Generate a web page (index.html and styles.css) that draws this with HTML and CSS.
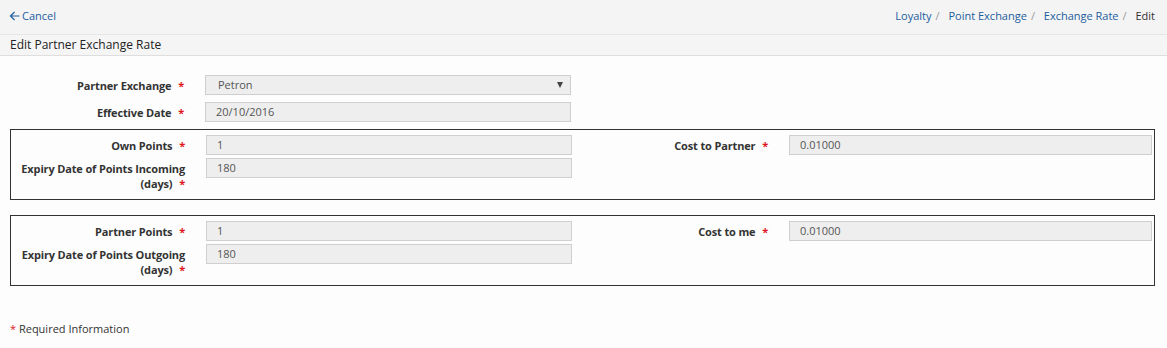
FILE: index.html
```html
<!DOCTYPE html>
<html lang="en">
<head>
    <meta charset="UTF-8">
    <meta name="viewport" content="width=device-width, initial-scale=1.0">
    <title>Edit Partner Exchange Rate</title>
    <link rel="stylesheet" href="styles.css">
</head>
<body>
    <div class="topbar">
        <a class="cancel" href="#">
            <svg width="11" height="10" viewBox="0 0 11 10"><path d="M10.5 5H1.5M5.5 1L1.5 5L5.5 9" fill="none" stroke="#1b5d9e" stroke-width="1.2"/></svg>
            Cancel
        </a>
        <div class="breadcrumb">
            <a href="#">Loyalty</a><span class="sep">/</span>
            <a href="#">Point Exchange</a><span class="sep">/</span>
            <a href="#">Exchange Rate</a><span class="sep">/</span>
            <span class="current">Edit</span>
        </div>
    </div>

    <div class="title-bar">Edit Partner Exchange Rate</div>

    <div class="content">
        <div class="row">
            <label>Partner Exchange <span class="req">*</span></label>
            <div class="field select">Petron <span class="caret"></span></div>
        </div>
        <div class="row">
            <label>Effective Date <span class="req">*</span></label>
            <div class="field">20/10/2016</div>
        </div>

        <!-- Incoming -->
        <div class="box">
            <div class="col">
                <div class="row">
                    <label>Own Points <span class="req">*</span></label>
                    <div class="field">1</div>
                </div>
                <div class="row">
                    <label>Expiry Date of Points Incoming <span class="nowrap">(days) <span class="req">*</span></span></label>
                    <div class="field">180</div>
                </div>
            </div>
            <div class="col right">
                <div class="row">
                    <label>Cost to Partner <span class="req">*</span></label>
                    <div class="field">0.01000</div>
                </div>
            </div>
        </div>

        <!-- Outgoing -->
        <div class="box">
            <div class="col">
                <div class="row">
                    <label>Partner Points <span class="req">*</span></label>
                    <div class="field">1</div>
                </div>
                <div class="row">
                    <label>Expiry Date of Points Outgoing <span class="nowrap">(days) <span class="req">*</span></span></label>
                    <div class="field">180</div>
                </div>
            </div>
            <div class="col right">
                <div class="row">
                    <label>Cost to me <span class="req">*</span></label>
                    <div class="field">0.01000</div>
                </div>
            </div>
        </div>

        <p class="note"><span class="req">*</span> Required Information</p>
    </div>
</body>
</html>
```

FILE: styles.css
```css
body {
    margin: 0;
    background: #fdfdfd;
    font-family: 'Open Sans', 'Liberation Sans', sans-serif;
    font-size: 11px;
    color: #333;
}

a {
    color: #1b5d9e;
    text-decoration: none;
}

.topbar {
    height: 31px;
    background: #f4f4f4;
    border-bottom: 1px solid #e6e6e6;
    display: flex;
    align-items: center;
    justify-content: space-between;
    padding: 0 12px 3px 9px;
}

.cancel {
    display: flex;
    align-items: center;
    gap: 2px;
}

.breadcrumb .sep {
    color: #999;
    margin: 0 6px 0 4px;
}

.breadcrumb .current {
    color: #333;
}

.title-bar {
    height: 20px;
    line-height: 20px;
    background: #f5f5f5;
    border-bottom: 1px solid #dedede;
    padding-left: 10px;
    font-size: 12px;
    color: #222;
}

.content {
    padding: 19px 12px 0 10px;
}

.row {
    display: grid;
    grid-template-columns: 176px 366px;
    column-gap: 19px;
    margin-bottom: 7px;
}

label {
    font-weight: bold;
    text-align: right;
    line-height: 15px;
    padding-top: 3px;
    padding-right: 2px;
    letter-spacing: -0.15px;
}

.nowrap {
    white-space: nowrap;
}

.req {
    color: #e0161e;
    margin-left: 4px;
}

.field {
    height: 18px;
    line-height: 18px;
    background: #eeeeee;
    border: 1px solid #cfcfcf;
    padding: 0 10px;
    color: #555;
    font-size: 11px;
    position: relative;
}

.select {
    padding-left: 12px;
}

.caret {
    position: absolute;
    right: 7px;
    top: 6px;
    border-left: 3.5px solid transparent;
    border-right: 3.5px solid transparent;
    border-top: 6px solid #444;
}

.box {
    border: 1px solid #333;
    display: flex;
    padding: 5px 2px 8px 0;
    margin-top: 7px;
    margin-bottom: 15px;
}

.box .row {
    margin-bottom: 3px;
}

.box .row:last-child {
    margin-bottom: 0;
}

.box .col {
    width: 561px;
}

.box .right {
    margin-left: 19px;
}

.box .right .row {
    grid-template-columns: 179px 363px;
}

.note {
    margin: 35px 0 0 0;
    line-height: 15px;
}

.note .req {
    margin-left: 0;
}
```
